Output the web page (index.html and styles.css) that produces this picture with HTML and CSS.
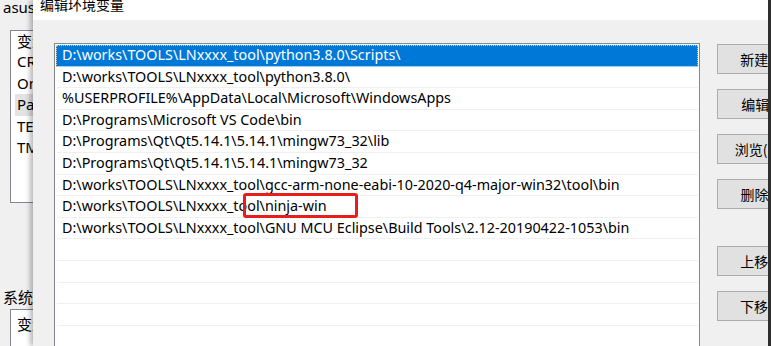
FILE: index.html
```html
<!DOCTYPE html>
<html lang="zh-CN">
<head>
<meta charset="utf-8">
<title>编辑环境变量</title>
<link rel="stylesheet" href="styles.css">
</head>
<body>
<div class="desktop">
  <div class="bgwin">
    <div class="bg-label top-label">asus 的用户变量(U)</div>
    <div class="bg-list">
      <div class="bg-head">变量</div>
      <div class="bg-row">CRAMFS</div>
      <div class="bg-row">OneDrive</div>
      <div class="bg-row bg-sel">Path</div>
      <div class="bg-row">TEMP</div>
      <div class="bg-row">TMP</div>
    </div>
    <div class="bg-label sys-label">系统变量(S)</div>
    <div class="bg-list bg-list2">
      <div class="bg-head">变量</div>
    </div>
  </div>
  <div class="dialog">
    <div class="titlebar"><span class="title">编辑环境变量</span></div>
    <div class="body">
      <div class="list">
        <div class="row sel">D:\works\TOOLS\LNxxxx_tool\python3.8.0\Scripts\</div>
        <div class="row">D:\works\TOOLS\LNxxxx_tool\python3.8.0\</div>
        <div class="row">%USERPROFILE%\AppData\Local\Microsoft\WindowsApps</div>
        <div class="row">D:\Programs\Microsoft VS Code\bin</div>
        <div class="row">D:\Programs\Qt\Qt5.14.1\5.14.1\mingw73_32\lib</div>
        <div class="row">D:\Programs\Qt\Qt5.14.1\5.14.1\mingw73_32</div>
        <div class="row">D:\works\TOOLS\LNxxxx_tool\gcc-arm-none-eabi-10-2020-q4-major-win32\tool\bin</div>
        <div class="row">D:\works\TOOLS\LNxxxx_tool\ninja-win</div>
        <div class="row">D:\works\TOOLS\LNxxxx_tool\GNU MCU Eclipse\Build Tools\2.12-20190422-1053\bin</div>
        <div class="row"></div>
        <div class="row"></div>
        <div class="row"></div>
        <div class="row"></div>
        <div class="row"></div>
        <div class="row"></div>
      </div>
      <div class="buttons">
        <button class="btn">新建(N)</button>
        <button class="btn">编辑(E)</button>
        <button class="btn">浏览(B)...</button>
        <button class="btn">删除(D)</button>
        <button class="btn btn-gap">上移(U)</button>
        <button class="btn">下移(O)</button>
      </div>
    </div>
    <div class="highlight"></div>
  </div>
  <div class="edge"></div>
</div>
</body>
</html>
```
FILE: styles.css
```css
* { box-sizing: border-box; }
html, body {
  margin: 0;
  padding: 0;
  width: 771px;
  height: 346px;
  overflow: hidden;
  background: #f0f0f0;
}
body {
  font-family: "Noto Sans", "Noto Sans CJK SC", sans-serif;
  font-size: 15px;
  color: #000;
}
.desktop {
  display: flex;
  width: 771px;
  height: 346px;
}
.bgwin {
  width: 33px;
  flex: none;
  overflow: hidden;
  background: #f0f0f0;
  position: relative;
}
.bg-label {
  white-space: nowrap;
  line-height: 20px;
  padding-left: 3px;
}
.top-label { margin-top: -3px; }
.bg-list {
  margin-left: 10px;
  margin-top: 13px;
  width: 300px;
  height: 173px;
  background: #fff;
  border: 1px solid #828790;
}
.bg-head {
  height: 20px;
  line-height: 20px;
  padding-left: 6px;
  font-family: "Noto Sans CJK SC", sans-serif;
}
.bg-row {
  height: 21.6px;
  line-height: 21.6px;
  margin-left: 4px;
  padding-left: 2px;
  white-space: nowrap;
}
.bg-sel { background: #e3e3e3; }
.sys-label {
  margin-top: 84px;
  font-family: "Noto Sans CJK SC", sans-serif;
}
.bg-list2 {
  margin-top: 2px;
  height: 60px;
}
.bg-list2 .bg-head { margin-top: 4px; }

.dialog {
  flex: 1;
  position: relative;
  display: flex;
  flex-direction: column;
  background: #f0f0f0;
  overflow: hidden;
  box-shadow: -3px 0 5px rgba(0,0,0,0.28);
  z-index: 1;
}
.titlebar {
  height: 20px;
  flex: none;
  background: #fff;
  padding-left: 7px;
  overflow: hidden;
}
.title {
  display: block;
  margin-top: -6px;
  line-height: 20px;
  font-family: "Noto Sans CJK SC", sans-serif;
  font-size: 14px;
  color: #000;
}
.body {
  display: flex;
  padding: 23px 0 0 21px;
  gap: 17px;
  flex: 1;
}
.list {
  width: 646px;
  flex: none;
  height: 320px;
  background: #fff;
  border: 1px solid #828790;
  border-bottom: none;
  padding: 1px 1px 0 1px;
  overflow: hidden;
  font-size: 14.35px;
}
.row {
  height: 21.6px;
  line-height: 20.6px;
  border-bottom: 1px solid #f0f0f0;
  margin-left: 1px;
  padding-left: 5px;
  white-space: nowrap;
}
.row.sel {
  background: #0078d7;
  color: #fff;
  margin-left: 0;
  padding-left: 6px;
  border-bottom: 1px solid #99c9ef;
  outline: 1px dotted #f6c28a;
  outline-offset: -1px;
}
.buttons {
  display: flex;
  flex-direction: column;
  gap: 15px;
  flex: none;
  padding-top: 1px;
}
.btn {
  width: 94px;
  height: 30px;
  background: #e1e1e1;
  border: 1px solid #adadad;
  font-family: "Noto Sans CJK SC", sans-serif;
  font-size: 14px;
  color: #000;
  padding: 0;
  margin: 0;
}
.btn-gap { margin-top: 22px; }
.highlight {
  position: absolute;
  left: 210px;
  top: 193px;
  width: 115px;
  height: 25px;
  border: 3px solid #e81e1e;
  border-radius: 3px;
}
.edge {
  width: 3px;
  flex: none;
  background: #2e2e2e;
  z-index: 2;
}
```
